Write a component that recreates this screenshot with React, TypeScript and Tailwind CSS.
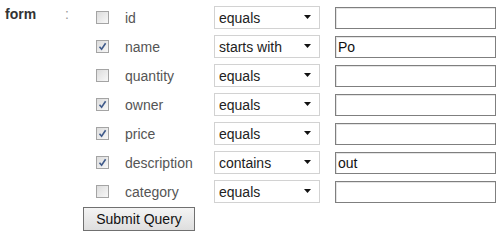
import React from 'react';

type Field = {
  name: string;
  checked: boolean;
  op: string;
  value: string;
};

const fields: Field[] = [
  { name: 'id', checked: false, op: 'equals', value: '' },
  { name: 'name', checked: true, op: 'starts with', value: 'Po' },
  { name: 'quantity', checked: false, op: 'equals', value: '' },
  { name: 'owner', checked: true, op: 'equals', value: '' },
  { name: 'price', checked: true, op: 'equals', value: '' },
  { name: 'description', checked: true, op: 'contains', value: 'out' },
  { name: 'category', checked: false, op: 'equals', value: '' },
];

const ops = ['equals', 'starts with', 'contains'];

function CheckBox({ checked }: { checked: boolean }) {
  return (
    <span className="flex h-[13px] w-[13px] items-center justify-center border border-[#a4a4a4] bg-gradient-to-br from-[#dcdcdc] to-[#f8f8f8]">
      {checked && (
        <svg width="9" height="9" viewBox="0 0 9 9" aria-hidden="true">
          <path d="M1.5 4.8 L3.6 7.2 L7.6 1.2" fill="none" stroke="#3f5a8a" strokeWidth="1.6" />
        </svg>
      )}
    </span>
  );
}

function Row({ field }: { field: Field }) {
  return (
    <div className="flex h-[29px] items-center">
      <div className="w-[42px] pl-[13px]">
        <CheckBox checked={field.checked} />
      </div>
      <div className="w-[89px] text-[#555]">{field.name}</div>
      <div className="relative w-[106px]">
        <select
          defaultValue={field.op}
          className="h-[23px] w-full appearance-none border border-[#d2d2d2] bg-white pl-[4px] text-[14px] text-[#222] outline-none"
        >
          {ops.map((o) => (
            <option key={o}>{o}</option>
          ))}
        </select>
        <svg
          className="pointer-events-none absolute right-[9px] top-[9px]"
          width="7"
          height="4"
          viewBox="0 0 7 4"
          aria-hidden="true"
        >
          <path d="M0 0 H7 L3.5 4 Z" fill="#111" />
        </svg>
      </div>
      <input
        type="text"
        defaultValue={field.value}
        className="ml-[15px] h-[22px] w-[161px] border border-[#7f7f7f] bg-white px-[2px] text-[14px] text-[#111] shadow-[inset_1px_1px_0_#e4e4e4] outline-none"
      />
    </div>
  );
}

export default function App() {
  return (
    <div className="h-[235px] w-[500px] bg-white font-['Liberation_Sans',Arial,sans-serif] text-[14px] leading-[16px]">
      <div className="flex pl-[5px] pt-[3px]">
        <div className="w-[60px] pt-[3px] font-bold text-[#333]">form</div>
        <div className="w-[18px] pt-[3px] text-[#999]">:</div>
        <div className="flex flex-col">
          {fields.map((f) => (
            <Row key={f.name} field={f} />
          ))}
          <div className="pt-[1px]">
            <button
              type="button"
              className="h-[24px] w-[112px] border border-[#707070] bg-gradient-to-b from-[#f4f4f4] to-[#dedede] text-[14px] text-[#111]"
            >
              Submit Query
            </button>
          </div>
        </div>
      </div>
    </div>
  );
}
